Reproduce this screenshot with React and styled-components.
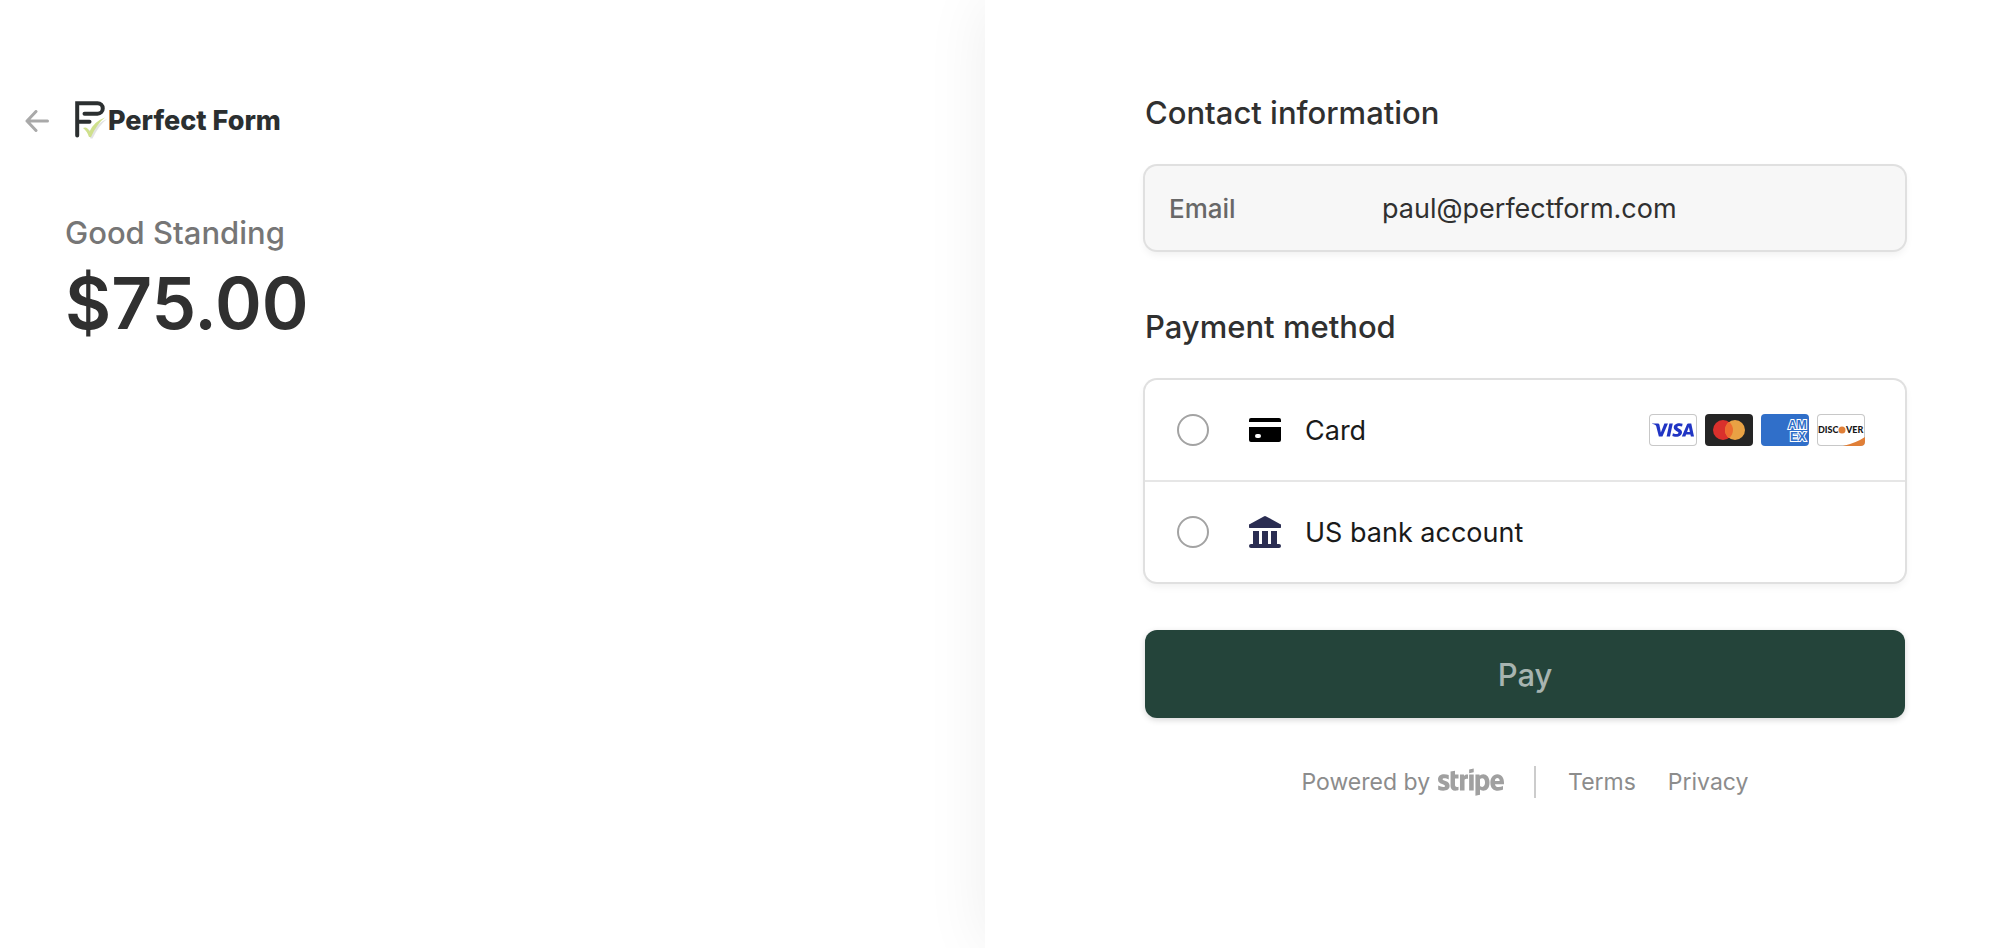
import styled, { createGlobalStyle } from 'styled-components';
import { FaStripe } from 'react-icons/fa';
import { SiVisa } from 'react-icons/si';

const App = () => {
  return (
    <>
      <GlobalStyle />
      <Page>
        <Summary>
          <Header>
            <BackButton type="button" aria-label="Back">
              <ArrowIcon />
            </BackButton>
            <Brand>
              <BrandMark />
              <BrandName>Perfect Form</BrandName>
            </Brand>
          </Header>
          <Product>
            <ProductName>Good Standing</ProductName>
            <Price>$75.00</Price>
          </Product>
        </Summary>
        <Checkout>
          <Form>
            <Title>Contact information</Title>
            <EmailField>
              <EmailLabel htmlFor="email">Email</EmailLabel>
              <EmailInput id="email" type="email" value="paul@perfectform.com" readOnly />
            </EmailField>
            <Title>Payment method</Title>
            <Methods>
              <Method htmlFor="card">
                <Radio type="radio" name="method" id="card" />
                <CardIcon />
                <MethodName>Card</MethodName>
                <CardBrands />
              </Method>
              <Method htmlFor="bank">
                <Radio type="radio" name="method" id="bank" />
                <BankIcon />
                <MethodName>US bank account</MethodName>
              </Method>
            </Methods>
            <PayButton type="button">Pay</PayButton>
          </Form>
          <Footer>
            <Powered href="#stripe">
              Powered by
              <StripeLogo viewBox="0 110 640 290" aria-label="stripe" />
            </Powered>
            <Separator />
            <FooterLinks>
              <FooterLink href="#terms">Terms</FooterLink>
              <FooterLink href="#privacy">Privacy</FooterLink>
            </FooterLinks>
          </Footer>
        </Checkout>
      </Page>
    </>
  );
};

const ArrowIcon = () => (
  <svg width="24" height="22" viewBox="0 0 24 22" fill="none" stroke="#a9a9a9" strokeWidth="3" strokeLinecap="round" strokeLinejoin="round">
    <path d="M11 1.5L2 11l9 9.500M2 11h20.500" />
  </svg>
);

const BrandMark = () => (
  <svg width="32" height="40" viewBox="0 0 32 40" fill="none">
    <path d="M2.200 34.500V2.200H22.500a5 5 0 0 1 0 10.500H9.500" stroke="#2b2f30" strokeWidth="4" strokeLinecap="round" strokeLinejoin="miter" />
    <path d="M3 20.800H14.500" stroke="#2b2f30" strokeWidth="4" strokeLinecap="round" />
    <path d="M9.500 27.500q4-1.500 6 3.500q5-10 15.500-14q-8 6-14.500 19.500h-2q-2-6-5-9z" fill="#8a8f8a" opacity="0.25" transform="translate(1 1)" />
    <path d="M8 27q4-2 6.500 3.500q4.500-10 15.500-14q-8 6-14 19.500h-2q-2-6-6-9z" fill="#cfe08c" />
  </svg>
);

const CardIcon = () => (
  <svg width="32" height="32" viewBox="0 0 32 32">
    <path d="M0 8V6a2 2 0 0 1 2-2h28a2 2 0 0 1 2 2v2z" />
    <path fillRule="evenodd" d="M0 13h32v13a2 2 0 0 1-2 2H2a2 2 0 0 1-2-2zM8 20a2 2 0 0 0 0 4h2a2 2 0 0 0 0-4z" />
  </svg>
);

const BankIcon = () => (
  <svg width="32" height="32" viewBox="0 0 32 32" fill="#2a2d52">
    <path d="M14.800 0.400a2.500 2.500 0 0 1 2.400 0L31 8a2 2 0 0 1-1 4H2a2 2 0 0 1-1-4z" />
    <path d="M4 15h6v13H4zM13 15h6v13h-6zM22 15h6v13h-6z" />
    <rect y="28" width="32" height="4" rx="2" />
  </svg>
);

const CardBrands = () => (
  <Brands>
    <BrandCard $bg="#ffffff" $outlined>
      <VisaLogo aria-label="Visa" viewBox="0 8 24 8" />
    </BrandCard>
    <BrandCard $bg="#252525">
      <svg width="48" height="32" viewBox="0 0 48 32">
        <circle cx="18" cy="16" r="10" fill="#d9302c" />
        <circle cx="30" cy="16" r="10" fill="#e9a244" />
        <path d="M24 8a10 10 0 0 1 0 16a10 10 0 0 1 0-16z" fill="#ed6c30" />
      </svg>
    </BrandCard>
    <BrandCard $bg="#306fc9">
      <svg width="48" height="32" viewBox="0 0 48 32" fill="#306fc9" stroke="#ffffff" strokeWidth="2" paintOrder="stroke" fontFamily="'Liberation Sans', sans-serif" fontWeight="700" fontSize="12">
        <text x="27" y="15">AM</text>
        <text x="29" y="27">EX</text>
      </svg>
    </BrandCard>
    <BrandCard $bg="#ffffff" $outlined>
      <svg width="48" height="32" viewBox="0 0 48 32" fontFamily="Lato, sans-serif" fontWeight="900" fontSize="9">
        <path d="M26 32Q39 29 48 23V28a4 4 0 0 1-4 4z" fill="#e07f37" />
        <text x="1" y="19" fill="#161616">DISC</text>
        <circle cx="25" cy="16" r="3.500" fill="#e07f37" />
        <text x="29" y="19" fill="#161616">VER</text>
      </svg>
    </BrandCard>
  </Brands>
);

const GlobalStyle = createGlobalStyle`
  * {
    box-sizing: border-box;
  }
  body {
    margin: 0;
    background: #ffffff;
    color: #303030;
    font-family: Inter, 'Liberation Sans', sans-serif;
    font-feature-settings: 'calt' 0;
  }
`;

const Page = styled.div`
  display: grid;
  grid-template-columns: 985fr 1019fr;
  min-height: 100vh;
  overflow: hidden;
`;
const Summary = styled.section`
  padding: 101px 25px 40px;
`;
const Header = styled.header`
  display: flex;
  align-items: center;
  gap: 26px;
  height: 40px;
`;
const BackButton = styled.button`
  display: flex;
  padding: 0;
  border: 0;
  background: none;
  cursor: pointer;
`;
const Brand = styled.div`
  display: flex;
  align-items: center;
  gap: 1px;
`;
const BrandName = styled.span`
  font-size: 27px;
  line-height: 40px;
  font-weight: 800;
  color: #2b2f30;
`;
const Product = styled.div`
  padding: 72px 0 0 40px;
`;
const ProductName = styled.h1`
  margin: 0;
  font-size: 31px;
  line-height: 40px;
  font-weight: 500;
  color: #767676;
`;
const Price = styled.p`
  margin: 8px 0 0;
  font-size: 71px;
  line-height: 84px;
  font-weight: 600;
`;
const Checkout = styled.main`
  padding: 93px 99px 40px 160px;
  background: #ffffff;
  box-shadow: 0 0 60px rgba(0, 0, 0, 0.07);
`;
const Form = styled.form`
  display: flex;
  flex-direction: column;
`;
const Title = styled.h2`
  margin: 0 0 33px;
  font-size: 31px;
  line-height: 40px;
  font-weight: 500;
`;
const EmailField = styled.div`
  display: flex;
  align-items: center;
  height: 84px;
  margin-bottom: 57px;
  padding: 0 24px;
  border-radius: 12px;
  background: #f7f7f7;
  box-shadow: 0 0 0 2px #e0e0e0, 0 4px 8px rgba(0, 0, 0, 0.07);
`;
const EmailLabel = styled.label`
  flex: 0 0 213px;
  font-size: 26px;
  font-weight: 500;
  color: #686868;
`;
const EmailInput = styled.input`
  flex: 1;
  min-width: 0;
  padding: 0;
  border: 0;
  outline: 0;
  background: none;
  color: #303030;
  font-family: inherit;
  font-feature-settings: inherit;
  font-size: 27px;
`;
const Methods = styled.div`
  border-radius: 12px;
  box-shadow: 0 0 0 2px #e0e0e0, 0 4px 8px rgba(0, 0, 0, 0.07);
`;
const Method = styled.label`
  display: flex;
  align-items: center;
  height: 100px;
  padding: 0 40px 0 32px;
  cursor: pointer;

  & + & {
    height: 102px;
    border-top: 2px solid #e6e6e6;
  }
`;
const Radio = styled.input`
  appearance: none;
  width: 32px;
  height: 32px;
  margin: 0 40px 0 0;
  border: 2px solid #a3a3a3;
  border-radius: 50%;

  &:checked {
    border: 10px solid #24443a;
  }
`;
const MethodName = styled.span`
  margin-left: 24px;
  font-size: 27px;
  color: #1a1a1a;
`;
const Brands = styled.span`
  display: flex;
  gap: 8px;
  margin-left: auto;
`;
const BrandCard = styled.span`
  display: flex;
  align-items: center;
  justify-content: center;
  width: 48px;
  height: 32px;
  overflow: hidden;
  border-radius: 4px;
  background: ${({ $bg }) => $bg};
  box-shadow: ${({ $outlined }) => ($outlined ? 'inset 0 0 0 1px #c8c8c8' : 'none')};
`;
const VisaLogo = styled(SiVisa)`
  width: 42px;
  height: 14px;
  color: #2135c4;
`;
const PayButton = styled.button`
  height: 88px;
  margin-top: 48px;
  border: 0;
  border-radius: 12px;
  background: #24443a;
  box-shadow: 0 2px 6px rgba(0, 0, 0, 0.16);
  color: #a7b4b0;
  font-family: inherit;
  font-size: 31px;
  font-weight: 500;
`;
const Footer = styled.footer`
  display: flex;
  align-items: center;
  justify-content: center;
  margin-top: 48px;
  font-size: 23px;
  line-height: 32px;
`;
const FooterLink = styled.a`
  color: #8c8c8c;
  text-decoration: none;
`;
const Powered = styled(FooterLink)`
  display: flex;
  align-items: center;
  gap: 8px;
`;
const StripeLogo = styled(FaStripe)`
  width: 66px;
  height: 30px;
  color: #a0a0a0;
`;
const Separator = styled.span`
  width: 2px;
  height: 32px;
  margin: 0 32px 0 30px;
  background: #cccccc;
`;
const FooterLinks = styled.nav`
  display: flex;
  gap: 32px;
`;

export default App;
